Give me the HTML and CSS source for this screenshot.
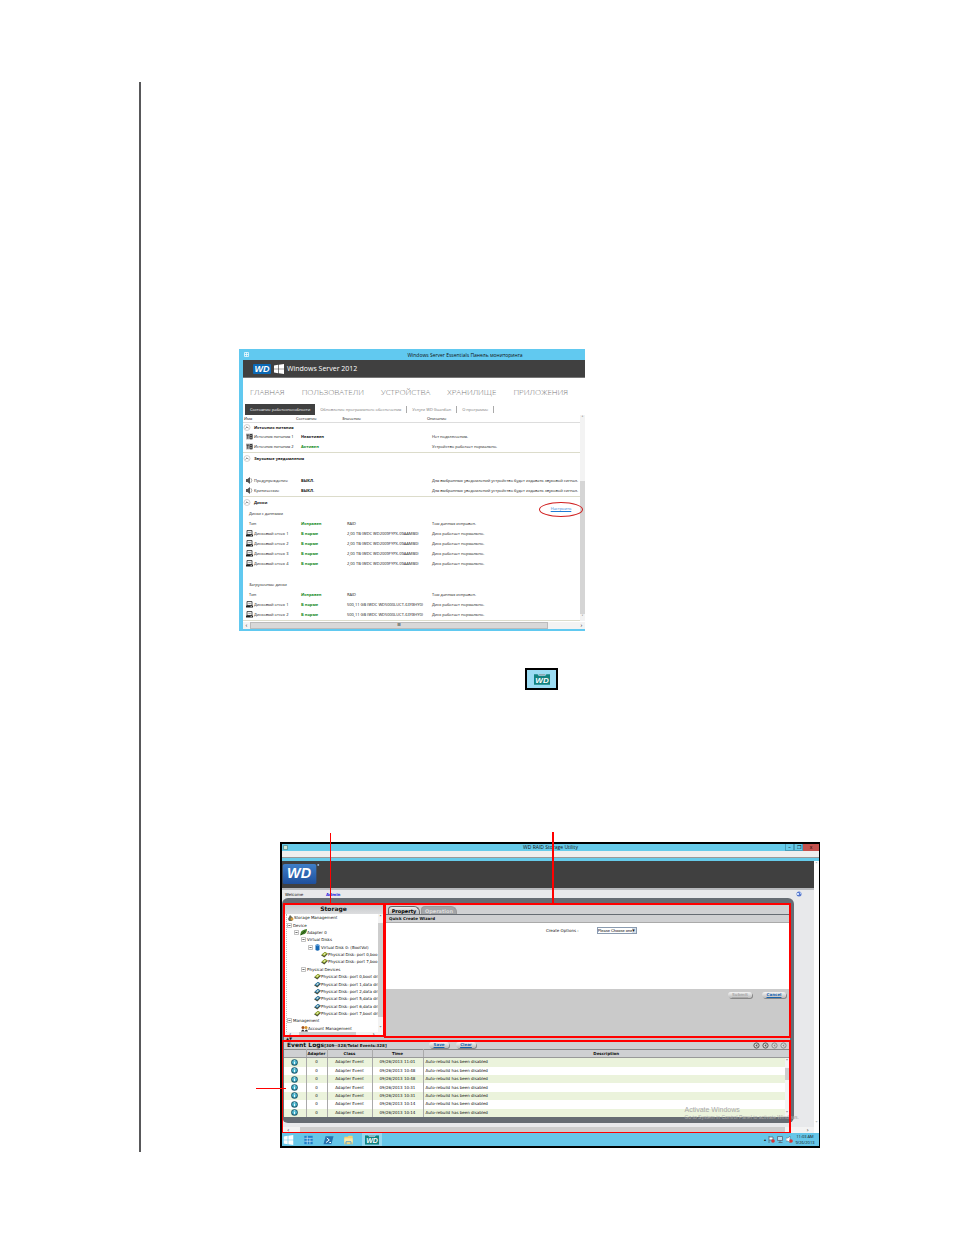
FILE: index.html
```
<!DOCTYPE html>
<html lang="ru">
<head>
    <meta charset="utf-8">
    <title>WD RAID Storage Utility</title>
    <link rel="stylesheet" href="styles.css">
</head>
<body>
<svg class="defs" aria-hidden="true">
    <symbol id="i-up" viewBox="0 0 8 8"><circle cx="4" cy="4" r="3.4" fill="#fff" stroke="#aaa" stroke-width=".6"/><path d="M2.3 4.9 4 3.2l1.7 1.7" fill="none" stroke="#444" stroke-width=".8"/></symbol>
    <symbol id="i-power" viewBox="0 0 7 6"><path d="M0 0h7v6H0z" fill="#bbb"/><path d="M.5 1.5h2.6M1.8 1.5v3.8M4 1v4.3h2V1zM4 3h2" fill="none" stroke="#222" stroke-width=".8"/></symbol>
    <symbol id="i-sound" viewBox="0 0 7 7"><path d="M0 2h1.5L4 0v7L1.5 5H0z" fill="#555"/><path d="M4.8 1.2q2 2.2 0 4.6" fill="none" stroke="#777" stroke-width=".7"/></symbol>
    <symbol id="i-disk" viewBox="0 0 7 7"><path d="M1 .5h5v4H1z" fill="#eee" stroke="#333" stroke-width=".8"/><path d="M0 4.5h7v2H0z" fill="#222"/><path d="M2.3 2.5h2.5" stroke="#777" stroke-width=".6"/><path d="M4.5 5.5h1.5" stroke="#fff" stroke-width=".6"/></symbol>
    <symbol id="i-win" viewBox="0 0 12 12"><path d="M0 1.8 5 1v4.6H0zM5.8.9 12 0v5.6H5.8zM0 6.4h5V11l-5-.8zM5.8 6.4H12V12l-6.2-.9z" fill="#fff"/></symbol>
    <symbol id="i-hdd" viewBox="0 0 8 7"><path d="M0 4.4 4.4.6 8 2.6 3.8 6.8z" fill="#4b4f3a"/><path d="M.9 3.6 4.4.6l2.8 1.6-3.6 3.2z" fill="currentColor"/><path d="M2.6 3.4 4.4 1.9l1.2.7L3.7 4.2z" fill="#eef3d0"/></symbol>
    <symbol id="i-minus" viewBox="0 0 5 5"><path d="M.5.5h4v4h-4z" fill="#fff" stroke="#999" stroke-width=".6"/><path d="M1.4 2.5h2.2" stroke="#333" stroke-width=".7"/></symbol>
    <symbol id="i-leaf" viewBox="0 0 7 7"><path d="M0 6.5 1 3q1-2 6-3-.2 4-2.500 5L2 5.700z" fill="#3f7d24"/><path d="M1 6 5 2" stroke="#1c3d12" stroke-width=".7"/></symbol>
    <symbol id="i-info" viewBox="0 0 7 7"><circle cx="3.500" cy="3.500" r="3.300" fill="#1d5b70"/><circle cx="3.500" cy="3.300" r="2.400" fill="#4db7cf"/><path d="M3.500 1.500v.8M3.500 2.900v2.200" stroke="#fff" stroke-width=".9"/></symbol>
    <symbol id="i-page" viewBox="0 0 7 7"><circle cx="3.500" cy="3.500" r="2.600" fill="#ddd" stroke="currentColor" stroke-width="1"/><path d="M4.300 2.100 2.400 3.500l1.900 1.400z" fill="currentColor"/></symbol>
    <symbol id="i-teal" viewBox="0 0 18 12"><path d="M0 0h4l1.500 2h7L14 0h4v12H0z" fill="#12827f"/><path d="M5 0h8l-1 1.500H6z" fill="#8d9a9e"/><text x="9" y="9.500" text-anchor="middle" class="wd" font-size="9">WD</text></symbol>
</svg>
<main class="page">

    <section class="dashboard">
        <header class="dash-title"><svg class="app" viewBox="0 0 5 5"><path d="M.5.5h4v4h-4zM.5 2.500h4M2.500.5v4" fill="none" stroke="#fff" stroke-width=".7"/></svg><span>Windows Server Essentials Панель мониторинга</span></header>
        <div class="dash-brand">
            <svg class="wd-small" viewBox="0 0 18 10"><rect width="18" height="10" rx="1" fill="#0b68b4"/><text x="9" y="8" text-anchor="middle" class="wd" font-size="9">WD</text></svg>
            <svg class="win"><use href="#i-win"/></svg>
            <span>Windows Server 2012</span>
        </div>
        <nav class="dash-nav">
            <a href="#">ГЛАВНАЯ</a><a href="#">ПОЛЬЗОВАТЕЛИ</a><a href="#">УСТРОЙСТВА</a><a href="#">ХРАНИЛИЩЕ</a><a href="#">ПРИЛОЖЕНИЯ</a>
        </nav>
        <div class="dash-tabs">
            <button class="active">Состояние работоспособности</button><button>Обновление программного обеспечения</button><button>Услуги WD Guardian</button><button>О программе</button>
        </div>
        <div class="dash-body">
            <table class="health">
                <colgroup><col class="c-name"><col class="c-state"><col class="c-value"><col></colgroup>
                <thead><tr><th>Имя</th><th>Состояние</th><th>Значение</th><th>Описание</th></tr></thead>
                <tbody>
                    <tr class="head"><td colspan="4"><svg><use href="#i-up"/></svg>Источник питания</td></tr>
                    <tr><td><svg><use href="#i-power"/></svg>Источник питания 1</td><td class="off">Неактивен</td><td></td><td>Нет подключения.</td></tr>
                    <tr class="last"><td><svg><use href="#i-power"/></svg>Источник питания 2</td><td class="ok">Активен</td><td></td><td>Устройство работает нормально.</td></tr>
                </tbody>
                <tbody>
                    <tr class="head tall"><td colspan="4"><svg><use href="#i-up"/></svg>Звуковые уведомления</td></tr>
                    <tr class="gap"><td colspan="4"></td></tr>
                    <tr><td><svg><use href="#i-sound"/></svg>Предупреждение</td><td class="off">ВЫКЛ.</td><td></td><td>Для выбранных уведомлений устройство будет издавать звуковой сигнал.</td></tr>
                    <tr class="last"><td><svg><use href="#i-sound"/></svg>Критические</td><td class="off">ВЫКЛ.</td><td></td><td>Для выбранных уведомлений устройство будет издавать звуковой сигнал.</td></tr>
                </tbody>
                <tbody>
                    <tr class="head tall"><td colspan="4"><svg><use href="#i-up"/></svg>Диски<a class="setup" href="#">Настроить</a></td></tr>
                    <tr class="sub"><td colspan="4">Диски с данными</td></tr>
                    <tr class="sub"><td>Тип</td><td class="ok">Исправен</td><td>RAID</td><td>Том данных исправен.</td></tr>
                    <tr><td><svg><use href="#i-disk"/></svg>Дисковый отсек 1</td><td class="ok">В норме</td><td>2,00 TB (WDC WD2009FYPX-09AAMB0)</td><td>Диск работает нормально.</td></tr>
                    <tr><td><svg><use href="#i-disk"/></svg>Дисковый отсек 2</td><td class="ok">В норме</td><td>2,00 TB (WDC WD2009FYPX-09AAMB0)</td><td>Диск работает нормально.</td></tr>
                    <tr><td><svg><use href="#i-disk"/></svg>Дисковый отсек 3</td><td class="ok">В норме</td><td>2,00 TB (WDC WD2009FYPX-09AAMB0)</td><td>Диск работает нормально.</td></tr>
                    <tr><td><svg><use href="#i-disk"/></svg>Дисковый отсек 4</td><td class="ok">В норме</td><td>2,00 TB (WDC WD2009FYPX-09AAMB0)</td><td>Диск работает нормально.</td></tr>
                    <tr class="gap"><td colspan="4"></td></tr>
                    <tr class="sub"><td colspan="4">Загрузочные диски</td></tr>
                    <tr class="sub"><td>Тип</td><td class="ok">Исправен</td><td>RAID</td><td>Том данных исправен.</td></tr>
                    <tr><td><svg><use href="#i-disk"/></svg>Дисковый отсек 1</td><td class="ok">В норме</td><td>500,11 GB (WDC WD5000LUCT-63Y8HY0)</td><td>Диск работает нормально.</td></tr>
                    <tr class="last"><td><svg><use href="#i-disk"/></svg>Дисковый отсек 2</td><td class="ok">В норме</td><td>500,11 GB (WDC WD5000LUCT-63Y8HY0)</td><td>Диск работает нормально.</td></tr>
                </tbody>
            </table>
            <div class="vbar"><i>˄</i><b></b><i>˅</i></div>
        </div>
        <div class="hbar"><i>‹</i><b>III</b><i>›</i></div>
    </section>

    <span class="tray-icon"><svg><use href="#i-teal"/></svg></span>

    <section class="raid">
        <header class="raid-title">
            <svg class="app" viewBox="0 0 5 5"><path d="M.5.5h4v4h-4z" fill="#cfe8d8" stroke="#477" stroke-width=".6"/></svg>
            <span>WD RAID Storage Utility</span>
            <div class="win-buttons"><button>–</button><button>❐</button><button class="close">x</button></div>
        </header>
        <div class="menubar"></div>
        <div class="client">
            <div class="workspace">
                <div class="raid-brand">
                    <svg viewBox="0 0 38 24">
                        <defs><linearGradient id="blue" x2="0" y2="1"><stop offset="0" stop-color="#3f7fc8"/><stop offset="1" stop-color="#1e4f9c"/></linearGradient></defs>
                        <rect y="2" width="35" height="21" rx="2" fill="url(#blue)"/><text x="17" y="17" text-anchor="middle" class="wd" font-size="15">WD</text><circle cx="37" cy="3" r="1" fill="#9cc3ee"/>
                    </svg>
                </div>
                <div class="welcome"><span>Welcome</span><b>Admin</b><svg viewBox="0 0 6 6"><circle cx="3" cy="3" r="2.500" fill="#5577cc"/><path d="M1 2h2v2H1zM3.500 1.500H5v2" fill="#cfe0ff"/></svg></div>
                <div class="frame">
                    <div class="panels">
                        <aside class="storage">
                            <h2>Storage</h2>
                            <div class="tree-box">
                                <ul class="tree">
                                    <li class="l0"><svg viewBox="0 0 7 7"><path d="M1 5 3 1l3 3-1 3H2z" fill="#6a6a58"/><circle cx="5" cy="5" r="1.500" fill="#d19a3a"/></svg>Storage Management</li>
                                    <li class="l0"><svg class="pm"><use href="#i-minus"/></svg>Device</li>
                                    <li class="l1"><svg class="pm"><use href="#i-minus"/></svg><svg><use href="#i-leaf"/></svg>Adapter 0</li>
                                    <li class="l2"><svg class="pm"><use href="#i-minus"/></svg>Virtual Disks</li>
                                    <li class="l3"><svg class="pm"><use href="#i-minus"/></svg><svg viewBox="0 0 6 7"><path d="M1 1q2-1.500 4 0v5q-2 1.500-4 0z" fill="#1668b4"/><path d="M1 1.200q2 1 4 0" stroke="#9cf" stroke-width=".6" fill="none"/></svg>Virtual Disk 0: (BootVol)</li>
                                    <li class="l5"><svg class="boot"><use href="#i-hdd"/></svg>Physical Disk: port 0,boo</li>
                                    <li class="l5"><svg class="boot"><use href="#i-hdd"/></svg>Physical Disk: port 7,boo</li>
                                    <li class="l2"><svg class="pm"><use href="#i-minus"/></svg>Physical Devices</li>
                                    <li class="l4"><svg class="boot"><use href="#i-hdd"/></svg>Physical Disk: port 0,boot dri</li>
                                    <li class="l4"><svg class="data"><use href="#i-hdd"/></svg>Physical Disk: port 1,data dri</li>
                                    <li class="l4"><svg class="data"><use href="#i-hdd"/></svg>Physical Disk: port 2,data dri</li>
                                    <li class="l4"><svg class="data"><use href="#i-hdd"/></svg>Physical Disk: port 5,data dri</li>
                                    <li class="l4"><svg class="data"><use href="#i-hdd"/></svg>Physical Disk: port 6,data dri</li>
                                    <li class="l4"><svg class="boot"><use href="#i-hdd"/></svg>Physical Disk: port 7,boot dri</li>
                                    <li class="l0"><svg class="pm"><use href="#i-minus"/></svg>Management</li>
                                    <li class="l2"><svg viewBox="0 0 7 6"><circle cx="2" cy="2" r="1.500" fill="#a5541c"/><circle cx="5" cy="2" r="1.500" fill="#d9952c"/><path d="M0 6q2-4 3.500 0zM3.500 6q2-4 3.500 0z" fill="#333"/></svg>Account Management</li>
                                </ul>
                                <div class="tree-v"><i>˄</i><b></b><i>˅</i></div>
                            </div>
                            <div class="tree-h"><i>‹</i><b></b><i>›</i></div>
                        </aside>
                        <section class="wizard">
                            <div class="raid-tabs"><button>Property</button><button class="dim">Operation</button></div>
                            <h3>Quick Create Wizard</h3>
                            <form class="wizard-form">
                                <label for="option">Create Options :</label>
                                <div class="select"><select id="option"><option>Please Choose one</option></select></div>
                            </form>
                            <div class="wizard-actions"><button class="pill" disabled>Submit</button><button class="pill">Cancel</button></div>
                        </section>
                    </div>
                    <div class="splitter">▲▼</div>
                    <section class="events">
                        <div class="events-bar">
                            <h2>Event Logs<small>[309--328/Total Events:328]</small></h2>
                            <button class="pill">Save</button><button class="pill">Clear</button>
                            <div class="pager"><svg><use href="#i-page"/></svg><svg><use href="#i-page"/></svg><svg class="dim"><use href="#i-page"/></svg><svg class="dim"><use href="#i-page"/></svg></div>
                        </div>
                        <div class="log-box">
                            <table class="log">
                                <colgroup><col class="e-icon"><col class="e-adapter"><col class="e-class"><col class="e-time"><col></colgroup>
                                <thead><tr><th></th><th>Adapter</th><th>Class</th><th>Time</th><th>Description</th></tr></thead>
                                <tbody>
                                    <tr><td><svg><use href="#i-info"/></svg></td><td>0</td><td>Adapter Event</td><td>09/26/2013 11:01</td><td>Auto-rebuild has been disabled</td></tr>
                                    <tr><td><svg><use href="#i-info"/></svg></td><td>0</td><td>Adapter Event</td><td>09/26/2013 10:48</td><td>Auto-rebuild has been disabled</td></tr>
                                    <tr><td><svg><use href="#i-info"/></svg></td><td>0</td><td>Adapter Event</td><td>09/26/2013 10:48</td><td>Auto-rebuild has been disabled</td></tr>
                                    <tr><td><svg><use href="#i-info"/></svg></td><td>0</td><td>Adapter Event</td><td>09/26/2013 10:31</td><td>Auto-rebuild has been disabled</td></tr>
                                    <tr><td><svg><use href="#i-info"/></svg></td><td>0</td><td>Adapter Event</td><td>09/26/2013 10:31</td><td>Auto-rebuild has been disabled</td></tr>
                                    <tr><td><svg><use href="#i-info"/></svg></td><td>0</td><td>Adapter Event</td><td>09/26/2013 10:14</td><td>Auto-rebuild has been disabled</td></tr>
                                    <tr><td><svg><use href="#i-info"/></svg></td><td>0</td><td>Adapter Event</td><td>09/26/2013 10:14</td><td>Auto-rebuild has been disabled</td></tr>
                                </tbody>
                            </table>
                            <div class="log-v"><i>˄</i><b></b><i>˅</i></div>
                        </div>
                    </section>
                </div>
                <div class="page-h"><i>‹</i><b></b><i>›</i></div>
            </div>
            <div class="page-v"><i>˄</i><i>˅</i></div>
        </div>
        <footer class="taskbar">
            <span><svg viewBox="0 0 12 12"><use href="#i-win"/></svg></span>
            <span><svg viewBox="0 0 12 12"><path d="M1 1h10v10H1z" fill="#1f7fc9"/><path d="M1 4h10M4.500 1v10M7.700 4v7M1 7.500h10" stroke="#d5eefb" stroke-width=".8"/></svg></span>
            <span><svg viewBox="0 0 12 12"><path d="M2.500 1.500H12L9.500 11H0z" fill="#2472ae"/><path d="M4 3.500 7 6 3 9M7 9h2" fill="none" stroke="#fff" stroke-width="1.200"/></svg></span>
            <span><svg viewBox="0 0 12 12"><path d="M1 2h4l1-1h5v10H1z" fill="#f2d377"/><path d="M1 4h10v5H1z" fill="#fae9a6"/><path d="M3 11V8h6v3" fill="none" stroke="#4a98d0"/></svg></span>
            <span class="open"><svg viewBox="0 0 18 12"><use href="#i-teal"/></svg></span>
            <div class="tray">
                <span>▴</span>
                <svg viewBox="0 0 7 7"><path d="M1 0v7M1 1h4v3H1" fill="#fff" stroke="#567" stroke-width=".8"/><circle cx="5" cy="5" r="1.800" fill="#d33"/></svg>
                <svg viewBox="0 0 7 7"><path d="M.5.5h5v4h-5zM3 4.500v2M1.500 6.500h4" fill="#bde" stroke="#567" stroke-width=".8"/></svg>
                <svg viewBox="0 0 7 7"><path d="M0 2h2l2-2v7L2 5H0z" fill="#fff" stroke="#567" stroke-width=".5"/><circle cx="5" cy="5" r="1.800" fill="#d33"/></svg>
                <time>11:03 AM<br>9/26/2013</time>
            </div>
        </footer>
        <div class="watermark"><p>Activate Windows</p><small>Go to System in Control Panel to activate Windows.</small></div>
        <!-- callouts -->
        <div class="mark mark-tree"></div>
        <div class="mark mark-main"></div>
        <div class="mark mark-log"></div>
        <div class="line line-tree"></div>
        <div class="line line-main"></div>
        <div class="line line-log"></div>
    </section>
</main>
</body>
</html>
```
FILE: styles.css
```
* {
    box-sizing: border-box;
}
body {
    margin: 0;
    background: #fff;
    font-family: "Open Sans", "Noto Sans", sans-serif;
    color: #111;
}
h2, h3, p, ul {
    margin: 0;
    padding: 0;
}
button {
    font: inherit;
    border: none;
    padding: 0;
    margin: 0;
    background: none;
}
i {
    font-style: normal;
}
svg {
    display: block;
    flex: none;
}
.defs {
    display: none;
}
.wd {
    font-family: "Liberation Sans", Arial, sans-serif;
    font-weight: bold;
    font-style: italic;
    fill: #fff;
}
.page {
    margin: 82px 0 0 139px;
    padding: 267px 20px 4px 98px;
    border-left: 2px solid #58585a;
}

/* dashboard */
.dashboard {
    max-width: 346px;
    border-left: 4px solid #61c9f0;
    border-bottom: 2px solid #61c9f0;
    background: #fff;
    font-size: 4px;
}
.dash-title {
    display: flex;
    align-items: center;
    height: 11px;
    background: #61c9f0;
    font-size: 5px;
}
.dash-title span {
    flex: 1;
    text-align: center;
    padding-left: 96px;
}
.app {
    width: 5px;
    height: 5px;
    margin-left: 1px;
}
.dash-brand {
    display: flex;
    align-items: center;
    height: 18px;
    padding-left: 10px;
    background: #404040;
    border-bottom: 1px solid #777;
    color: #fff;
    font-size: 7px;
}
.wd-small {
    width: 18px;
    height: 10px;
}
.win {
    width: 10px;
    height: 10px;
    margin: 0 3px;
}
.dash-nav {
    display: flex;
    gap: 17px;
    height: 26px;
    padding-left: 7px;
    align-items: center;
    font-size: 8px;
    font-weight: 300;
}
.dash-nav a {
    color: #777;
    text-decoration: none;
}
.dash-tabs {
    display: flex;
    height: 11px;
    padding-left: 2px;
    align-items: center;
}
.dash-tabs button {
    height: 7px;
    padding: 0 5px;
    line-height: 7px;
    border-right: 1px solid #aaa;
    color: #777;
}
.dash-tabs .active {
    height: 11px;
    line-height: 11px;
    background: #404040;
    border: none;
    color: #fff;
}
.dash-body {
    display: flex;
    padding-bottom: 1px;
}
.health {
    flex: 1;
    min-width: 0;
    table-layout: fixed;
    border-collapse: collapse;
    white-space: nowrap;
    line-height: 7px;
}
.c-name {
    width: 52px;
}
.c-state {
    width: 46px;
}
.c-value {
    width: 85px;
}
.health th {
    height: 7px;
    padding: 0 0 0 1px;
    text-align: left;
    font-weight: normal;
    border-bottom: 1px solid #ddd;
}
.health td {
    height: 10px;
    padding: 0 0 0 6px;
}
.health td:first-child {
    padding-left: 3px;
}
.health svg {
    display: inline-block;
    width: 7px;
    height: 7px;
    margin-right: 1px;
    vertical-align: middle;
}
.health .head td {
    position: relative;
    height: 9px;
    padding-left: 0;
    font-weight: bold;
}
.health .head svg {
    width: 8px;
    margin-right: 3px;
}
.health .tall td {
    height: 12px;
}
.health .sub td:first-child {
    padding-left: 6px;
}
.health .gap td {
    height: 11px;
}
.health .last td {
    height: 11px;
    border-bottom: 1px solid #dcdccb;
}
.ok, .off {
    font-weight: bold;
}
.ok {
    color: #138a1c;
}
.setup {
    position: absolute;
    top: 5px;
    right: -3px;
    width: 44px;
    height: 15px;
    border: 1px solid #d02020;
    border-radius: 50%;
    line-height: 12px;
    text-align: center;
    font-weight: normal;
    color: #1c7cd6;
}

/* scroll bars */
.vbar, .tree-v, .log-v, .page-v {
    display: flex;
    flex-direction: column;
    width: 5px;
    flex: none;
    font-size: 5px;
    line-height: 7px;
    text-align: center;
    background: #f3f3f3;
}
.vbar b {
    height: 133px;
    margin-top: auto;
    background: #d5d5d5;
}
.hbar, .tree-h, .page-h {
    display: flex;
    height: 7px;
    font-size: 6px;
    line-height: 6px;
    background: #f3f3f3;
}
.hbar i {
    width: 7px;
    text-align: center;
}
.hbar b {
    width: 298px;
    margin-right: auto;
    border: 1px solid #bbb;
    background: #d8d8d8;
    font-size: 3px;
    line-height: 5px;
    text-align: center;
}

.tray-icon {
    display: block;
    width: 33px;
    height: 22px;
    margin: 37px 0 152px 286px;
    padding: 4px 7px;
    border: 2px solid #000;
    background: #9bdcf3;
}
.tray-icon svg {
    width: 16px;
    height: 11px;
}

/* raid utility */
.raid {
    position: relative;
    max-width: 540px;
    margin-left: 41px;
    border: 2px solid #000;
    border-right-width: 1px;
    background: #e8e9eb;
    font-family: "DejaVu Sans", sans-serif;
    font-size: 4px;
}
.raid-title {
    display: flex;
    align-items: center;
    height: 7px;
    background: #66cbea;
    font-family: "Open Sans", sans-serif;
    font-size: 5px;
    line-height: 7px;
}
.raid-title span {
    flex: 1;
    padding-left: 28px;
    text-align: center;
}
.win-buttons {
    display: flex;
}
.win-buttons button {
    width: 9px;
    height: 7px;
    border: 1px solid #4a9cb8;
    border-top: none;
    line-height: 5px;
}
.win-buttons .close {
    width: 16px;
    background: #c4504c;
    border-color: #c4504c;
}
.menubar {
    height: 10px;
    border-bottom: 3px solid #66cbea;
    background: #efefef;
    box-shadow: inset 0 -1px #999;
}
.client {
    display: flex;
}
.workspace {
    flex: 1;
    min-width: 0;
}
.raid-brand {
    height: 27px;
    background: #404040;
}
.raid-brand svg {
    width: 38px;
    height: 24px;
    padding-top: 1px;
}
.welcome {
    display: flex;
    align-items: center;
    height: 10px;
    padding: 0 12px 0 3px;
    border-top: 2px solid #b8babd;
}
.welcome span {
    width: 41px;
}
.welcome b {
    color: #2222dd;
}
.welcome svg {
    width: 6px;
    height: 6px;
    margin-left: auto;
}
.frame {
    margin-right: 20px;
    padding: 6px 4px 6px 2px;
    border-radius: 6px;
    background: #666c73;
}
.panels {
    display: flex;
    gap: 3px;
    height: 133px;
}
.storage {
    display: flex;
    flex-direction: column;
    width: 99px;
    background: #fff;
}
.storage h2, .events-bar h2 {
    font-size: 6px;
    line-height: 10px;
}
.storage h2 {
    background: linear-gradient(#c5c7c9, #dcdddf);
    text-align: center;
    line-height: 10px;
}
.tree-box {
    display: flex;
    height: 118px;
}
.tree {
    display: flex;
    flex-direction: column;
    flex: 1;
    min-width: 0;
    list-style: none;
    margin-left: 2px;
    border-left: 1px dotted #bbb;
}
.tree li {
    display: flex;
    flex: 1;
    align-items: center;
    min-height: 0;
    white-space: nowrap;
}
.tree svg {
    width: 7px;
    height: 7px;
}
.tree .pm {
    width: 5px;
    height: 5px;
    margin-right: 1px;
}
.tree .l1 {
    padding-left: 7px;
}
.tree .l2 {
    padding-left: 14px;
}
.tree .l3 {
    padding-left: 21px;
}
.tree .l4 {
    padding-left: 27px;
}
.tree .l5 {
    padding-left: 34px;
}
.boot {
    color: #9fb52c;
}
.data {
    color: #2f7fb8;
}
.tree-v b {
    flex: 1;
    margin: 2px 0 8px;
    background: #cdcdcd;
}
.tree-h {
    height: 5px;
    padding: 0 8px 0 5px;
    line-height: 4px;
}
.tree-h b {
    width: 57px;
    margin: 0 auto 0 8px;
    background: #cdcdcd;
}
.wizard {
    display: flex;
    flex: 1;
    flex-direction: column;
    background: #cacaca;
}
.raid-tabs {
    display: flex;
    gap: 1px;
    height: 11px;
    padding: 2px 2px 0;
    background: #d0d1d3;
    border-bottom: 1px solid #666c73;
}
.raid-tabs button {
    width: 32px;
    border: 1px solid #666;
    border-bottom: none;
    border-radius: 4px 6px 0 0;
    background: linear-gradient(#eee, #bbb);
    font-size: 5px;
    line-height: 6px;
    font-weight: bold;
}
.raid-tabs .dim {
    width: 36px;
    background: #a3a5a8;
    border-color: #999;
    color: #ddd;
}
.wizard h3 {
    height: 8px;
    padding-left: 3px;
    border-bottom: 1px solid #aaa;
    background: #cfd0d2;
    font-size: 4px;
    line-height: 7px;
}
.wizard-form {
    display: flex;
    gap: 18px;
    height: 66px;
    padding: 4px 0 0 160px;
    background: #fff;
    line-height: 7px;
}
.select {
    position: relative;
    width: 40px;
    height: 7px;
}
.select::after {
    content: "▾";
    position: absolute;
    top: 1px;
    right: 1px;
    width: 4px;
    height: 5px;
    background: #d9e2ec;
    font-size: 5px;
    line-height: 5px;
    text-align: center;
}
.wizard-form select {
    display: block;
    width: 100%;
    height: 7px;
    padding: 0;
    appearance: none;
    border: 1px solid #8a9bb0;
    border-radius: 0;
    background: #fff;
    font-family: "Liberation Sans", sans-serif;
    font-size: 4px;
    line-height: 5px;
}
.wizard-actions {
    display: flex;
    justify-content: flex-end;
    gap: 10px;
    padding: 3px 4px 0 0;
}
.pill {
    width: 24px;
    height: 6px;
    border-radius: 3px;
    background: linear-gradient(#f4f4f4, #bbb);
    box-shadow: 1px 1px #888;
    font-weight: bold;
    line-height: 6px;
    text-decoration: underline;
    color: #1763ad;
}
.pill:disabled {
    color: #aaa;
}
.splitter {
    height: 4px;
    padding-left: 2px;
    background: #c2c3c5;
    line-height: 4px;
}
.events {
    background: #fff;
}
.events-bar {
    display: flex;
    align-items: center;
    gap: 7px;
    height: 8px;
    padding: 0 3px;
    background: #cfd0d2;
}
.events-bar h2 {
    width: 135px;
    white-space: nowrap;
}
.events-bar small {
    font-size: 4px;
}
.events-bar .pill {
    width: 20px;
}
.pager {
    display: flex;
    gap: 2px;
    margin-left: auto;
    color: #555;
}
.pager svg {
    width: 7px;
    height: 7px;
}
.pager .dim {
    color: #888;
}
.log-box {
    position: relative;
}
.log {
    width: 100%;
    height: 68px;
    table-layout: fixed;
    border-collapse: collapse;
    line-height: 6px;
}
.e-icon {
    width: 22px;
}
.e-adapter {
    width: 21px;
}
.e-class {
    width: 45px;
}
.e-time {
    width: 51px;
}
.log th, .log td {
    padding: 0;
    text-align: center;
    border-right: 1px solid #aaa;
}
.log th {
    height: 8px;
    background: #cfd0d2;
    border-top: 1px solid #888;
    border-bottom: 1px solid #999;
}
.log td:last-child {
    padding-left: 2px;
    text-align: left;
}
.log tbody tr:nth-child(odd) td {
    background: #ebf3dc;
}
.log svg {
    width: 7px;
    height: 7px;
    margin: 0 auto;
}
.log-v {
    position: absolute;
    top: 9px;
    right: 1px;
    bottom: 0;
    width: 4px;
}
.log-v b {
    height: 12px;
    margin: 3px 0 auto;
    background: #cdcdcd;
}
.page-h {
    height: 6px;
    margin-top: 4px;
    padding: 0 5px;
}
.page-h b {
    flex: 1;
    margin: 0 22px 0 11px;
    background: #cdcdcd;
}
.page-v {
    justify-content: space-between;
    background: #fff;
    color: #777;
    padding-bottom: 6px;
}
.taskbar {
    display: flex;
    align-items: center;
    height: 13px;
    background: #66c6e8;
}
.taskbar > span {
    width: 20px;
    height: 13px;
    padding: 2px 1px;
}
.taskbar > span svg {
    width: 11px;
    height: 10px;
}
.taskbar .open {
    padding: 2px 3px;
    background: #96d9f0;
}
.taskbar .open svg {
    width: 14px;
}
.tray {
    display: flex;
    gap: 2px;
    align-items: center;
    margin-left: auto;
    padding-right: 4px;
    font-family: "Open Sans", sans-serif;
}
.tray svg {
    width: 7px;
    height: 7px;
}
.tray time {
    width: 20px;
    line-height: 6px;
    text-align: center;
}
.watermark {
    position: absolute;
    right: 20px;
    bottom: 26px;
    font-family: "Liberation Sans", sans-serif;
    font-size: 7px;
    line-height: 8px;
    color: #a8a8a8;
}
.watermark small {
    display: block;
    font-size: 5px;
    line-height: 6px;
}
.mark, .line {
    position: absolute;
}
.mark {
    border: 2px solid #f00;
}
.mark-tree {
    top: 59px;
    left: 1px;
    width: 102px;
    height: 134px;
}
.mark-main {
    top: 59px;
    left: 102px;
    right: 28px;
    height: 135px;
}
.mark-log {
    top: 196px;
    left: 0;
    right: 28px;
    bottom: 13px;
    border-width: 2px 2px 1px 1px;
}
.line {
    background: #f00;
}
.line-tree {
    top: -11px;
    left: 48px;
    width: 1px;
    height: 71px;
}
.line-main {
    top: -12px;
    left: 270px;
    width: 2px;
    height: 72px;
}
.line-log {
    top: 244px;
    left: -26px;
    width: 30px;
    height: 1px;
}
```
